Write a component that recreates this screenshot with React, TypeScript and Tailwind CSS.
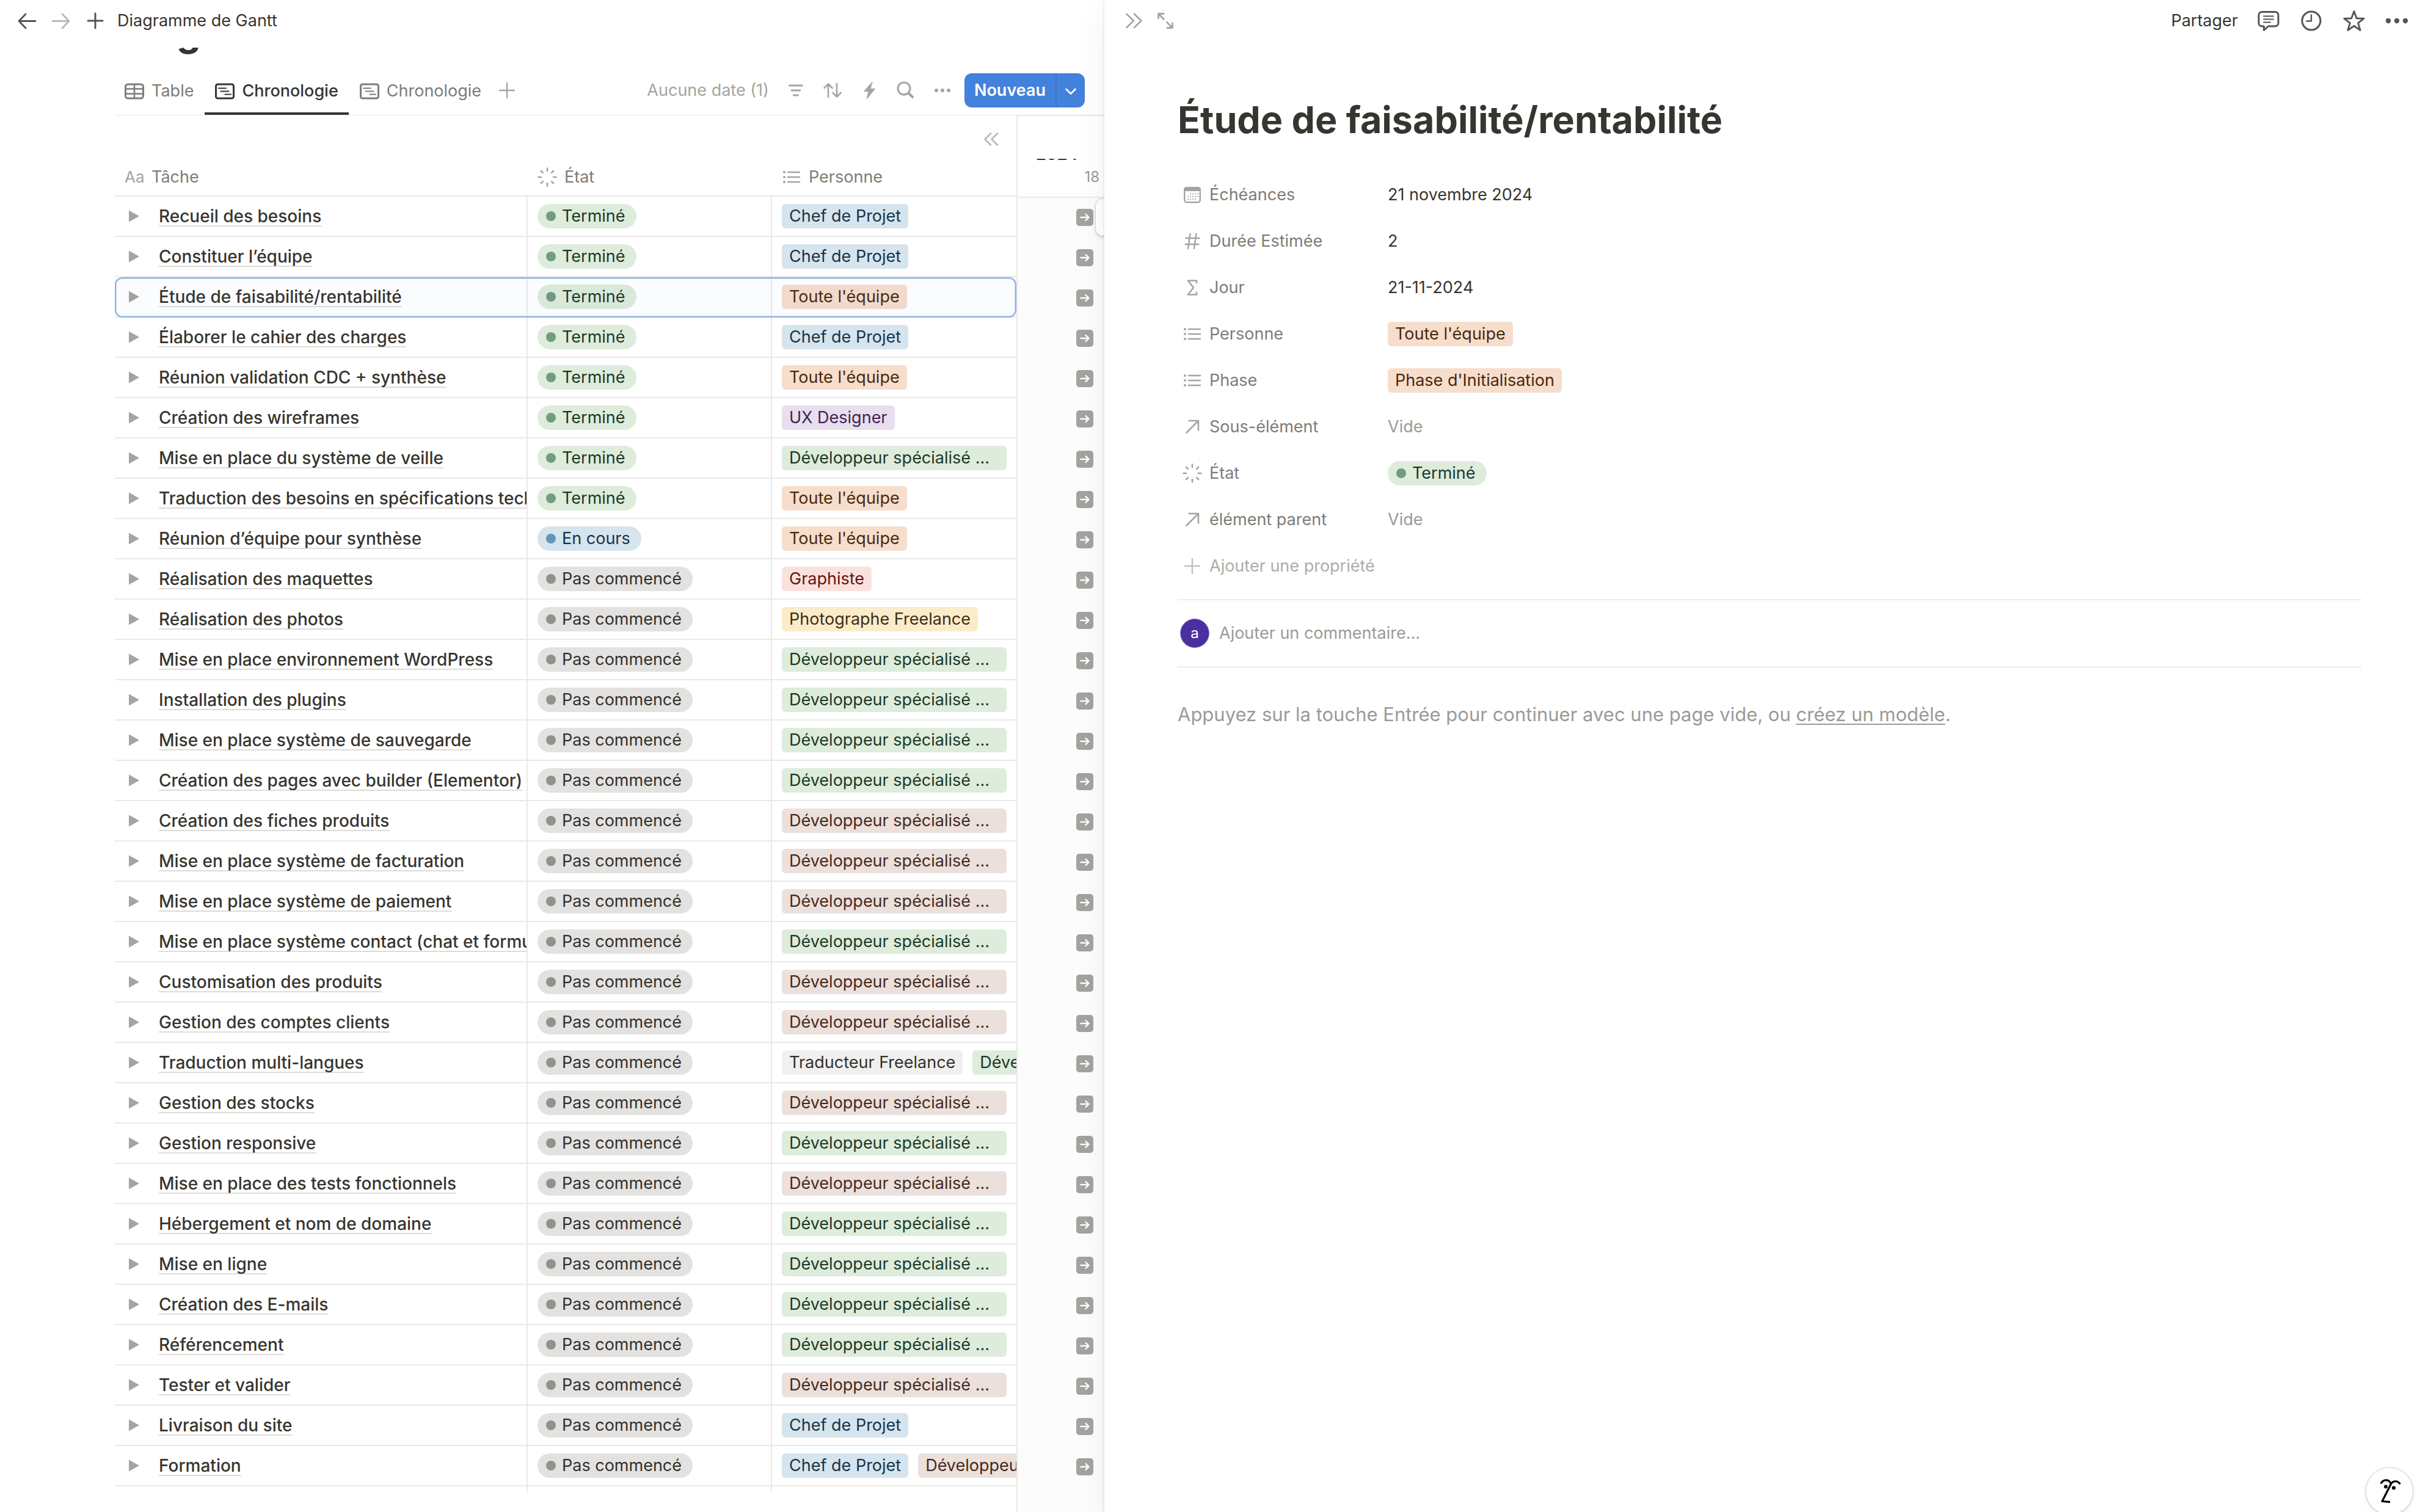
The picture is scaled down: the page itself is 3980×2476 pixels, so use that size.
import type { ReactNode } from "react";

type Tone = "blue" | "orange" | "purple" | "green" | "red" | "yellow" | "brown" | "gray";
type State = "done" | "progress" | "todo";

const TAG_TONES: Record<Tone, string> = {
  blue: "bg-[#d6e4ee] text-[#183347]",
  orange: "bg-[#f6ddcc] text-[#49290e]",
  purple: "bg-[#e7deee] text-[#412454]",
  green: "bg-[#ddecdb] text-[#1c3829]",
  red: "bg-[#fbe1de] text-[#5d1715]",
  yellow: "bg-[#fbecc9] text-[#402c1b]",
  brown: "bg-[#ebe0db] text-[#442a1e]",
  gray: "bg-[#f1f0ef] text-[#32302c]",
};

const STATES: Record<State, { label: string; pill: string; dot: string }> = {
  done: { label: "Terminé", pill: "bg-[#ddecdb] text-[#1c3829]", dot: "bg-[#749b82]" },
  progress: { label: "En cours", pill: "bg-[#d6e4ee] text-[#183347]", dot: "bg-[#6496ba]" },
  todo: { label: "Pas commencé", pill: "bg-[#e3e2e0] text-[#32302c]", dot: "bg-[#91918e]" },
};

const CHEF: [string, Tone] = ["Chef de Projet", "blue"];
const TEAM: [string, Tone] = ["Toute l'équipe", "orange"];
const DEV_WP: [string, Tone] = ["Développeur spécialisé WordPress", "green"];
const DEV_WOO: [string, Tone] = ["Développeur spécialisé WooCommerce", "brown"];

const TASKS: { name: string; state: State; people: [string, Tone][]; selected?: boolean }[] = [
  { name: "Recueil des besoins", state: "done", people: [CHEF] },
  { name: "Constituer l’équipe", state: "done", people: [CHEF] },
  { name: "Étude de faisabilité/rentabilité", state: "done", people: [TEAM], selected: true },
  { name: "Élaborer le cahier des charges", state: "done", people: [CHEF] },
  { name: "Réunion validation CDC + synthèse", state: "done", people: [TEAM] },
  { name: "Création des wireframes", state: "done", people: [["UX Designer", "purple"]] },
  { name: "Mise en place du système de veille", state: "done", people: [DEV_WP] },
  { name: "Traduction des besoins en spécifications techniques", state: "done", people: [TEAM] },
  { name: "Réunion d’équipe pour synthèse", state: "progress", people: [TEAM] },
  { name: "Réalisation des maquettes", state: "todo", people: [["Graphiste", "red"]] },
  { name: "Réalisation des photos", state: "todo", people: [["Photographe Freelance", "yellow"]] },
  { name: "Mise en place environnement WordPress", state: "todo", people: [DEV_WP] },
  { name: "Installation des plugins", state: "todo", people: [DEV_WP] },
  { name: "Mise en place système de sauvegarde", state: "todo", people: [DEV_WP] },
  { name: "Création des pages avec builder (Elementor)", state: "todo", people: [DEV_WP] },
  { name: "Création des fiches produits", state: "todo", people: [DEV_WOO] },
  { name: "Mise en place système de facturation", state: "todo", people: [DEV_WOO] },
  { name: "Mise en place système de paiement", state: "todo", people: [DEV_WOO] },
  { name: "Mise en place système contact (chat et formulaire)", state: "todo", people: [DEV_WP] },
  { name: "Customisation des produits", state: "todo", people: [DEV_WOO] },
  { name: "Gestion des comptes clients", state: "todo", people: [DEV_WOO] },
  { name: "Traduction multi-langues", state: "todo", people: [["Traducteur Freelance", "gray"], DEV_WP] },
  { name: "Gestion des stocks", state: "todo", people: [DEV_WOO] },
  { name: "Gestion responsive", state: "todo", people: [DEV_WP] },
  { name: "Mise en place des tests fonctionnels", state: "todo", people: [DEV_WOO] },
  { name: "Hébergement et nom de domaine", state: "todo", people: [DEV_WP] },
  { name: "Mise en ligne", state: "todo", people: [DEV_WP] },
  { name: "Création des E-mails", state: "todo", people: [DEV_WP] },
  { name: "Référencement", state: "todo", people: [DEV_WP] },
  { name: "Tester et valider", state: "todo", people: [DEV_WOO] },
  { name: "Livraison du site", state: "todo", people: [CHEF] },
  { name: "Formation", state: "todo", people: [CHEF, DEV_WOO] },
];

function Icon({ d, w = 3, children }: { d?: string; w?: number; children?: ReactNode }) {
  return (
    <svg
      viewBox="0 0 32 32"
      className="size-8 shrink-0"
      fill="none"
      stroke="currentColor"
      strokeWidth={w}
      strokeLinecap="round"
      strokeLinejoin="round"
      aria-hidden="true"
    >
      {d && <path d={d} />}
      {children}
    </svg>
  );
}

const ListIcon = () => (
  <Icon w={2.4} d="M10 8h19M10 16h19M10 24h19">
    <g fill="currentColor" stroke="none">
      <circle cx="4" cy="8" r="2" />
      <circle cx="4" cy="16" r="2" />
      <circle cx="4" cy="24" r="2" />
    </g>
  </Icon>
);

const StatusIcon = () => (
  <Icon w={2.6} d="M16 1.5v4.5M16 26v4.5M1.5 16H6M26 16h4.5M6 6l2.8 2.8M23.2 23.2 26 26M26 6l-2.8 2.8M8.8 23.2 6 26" />
);

const TimelineIcon = () => (
  <Icon w={3}>
    <rect x="1.5" y="5" width="29" height="23" rx="3" />
    <path strokeWidth="2.2" d="M6 11.5h12M9.5 16.5h13M16.5 21.5h9.5" />
  </Icon>
);

const TableIcon = () => (
  <Icon w={3}>
    <rect x="1.5" y="5" width="29" height="23" rx="4" />
    <path strokeWidth="2.6" d="M1.5 12.5h29M1.5 20.5h29M16 5v23" />
  </Icon>
);

const CalendarIcon = () => (
  <Icon w={2.4}>
    <rect x="3.2" y="4.2" width="25.6" height="24" rx="3.5" />
    <path fill="currentColor" stroke="none" d="M2 10V8a5 5 0 0 1 5-5h18a5 5 0 0 1 5 5v2z" />
    <path strokeWidth="2" d="M13 14.5h.1M17 14.5h.1M21 14.5h.1M25 14.5h.1M9 18.8h.1M13 18.8h.1M17 18.8h.1M21 18.8h.1M25 18.8h.1M9 23h.1M13 23h.1M17 23h.1M21 23h.1" />
  </Icon>
);

const HashIcon = () => <Icon w={2.4} d="M12.5 4 9 28M22.5 4 19 28M5.5 11h22M4.5 21h22" />;
const SigmaIcon = () => <Icon w={2.6} d="M23 8V4.5H9L18 16 9 27.5h14V24" />;
const RelationIcon = () => <Icon w={2.6} d="M6.5 25.5 25.5 6.5M10.5 6h15.5v15.5" />;
const PlusIcon = ({ w = 2.4 }: { w?: number }) => <Icon w={w} d="M16 4v24M4 16h24" />;

const DotsIcon = () => (
  <Icon>
    <g fill="currentColor" stroke="none">
      <circle cx="6" cy="16" r="3" />
      <circle cx="16" cy="16" r="3" />
      <circle cx="26" cy="16" r="3" />
    </g>
  </Icon>
);

function Tag({ label, tone }: { label: string; tone: Tone }) {
  return (
    <span className={`block h-10 max-w-[368px] shrink-0 rounded-md px-3 leading-10 ${TAG_TONES[tone]}`}>
      <span className="block truncate">{label}</span>
    </span>
  );
}

function StatePill({ state }: { state: State }) {
  const s = STATES[state];
  return (
    <span className={`inline-flex h-10 items-center gap-2.5 rounded-full pr-[18px] pl-3.5 ${s.pill}`}>
      <span className={`size-4 rounded-full ${s.dot}`} />
      {s.label}
    </span>
  );
}

function IconButton({ label, className = "", children }: { label: string; className?: string; children: ReactNode }) {
  return (
    <button type="button" aria-label={label} className={`flex shrink-0 items-center justify-center ${className}`}>
      {children}
    </button>
  );
}

function TaskTable() {
  return (
    <section className="w-[1476px] shrink-0 overflow-hidden border-t border-[#e9e9e7]">
      <div className="flex h-[69px] items-center justify-end pt-2 pr-[26px] text-[#b9b8b5]">
        <IconButton label="Replier le tableau">
          <Icon w={2.6} d="M16 6.5 6.5 16 16 25.5M27 6.5 17.5 16 27 25.5" />
        </IconButton>
      </div>
      <table className="w-full table-fixed border-separate border-spacing-0 text-left">
        <colgroup>
          <col className="w-[676px]" />
          <col className="w-[400px]" />
          <col className="w-[400px]" />
        </colgroup>
        <thead>
          <tr className="text-[#7d7c78]">
            <th className="h-16 border-b-2 border-[#e9e9e7] p-0 pt-0.5 pl-4 font-normal">
              <div className="flex items-center gap-3">
                <span className="w-8 text-[26px] text-[#a5a49f]">Aa</span>
                Tâche
              </div>
            </th>
            <th className="h-16 border-b-2 border-[#e9e9e7] p-0 pt-0.5 pl-4 font-normal">
              <div className="flex items-center gap-3">
                <span className="text-[#a5a49f]"><StatusIcon /></span>
                État
              </div>
            </th>
            <th className="h-16 border-b-2 border-[#e9e9e7] p-0 pt-0.5 pl-4 font-normal">
              <div className="flex items-center gap-3">
                <span className="text-[#a5a49f]"><ListIcon /></span>
                Personne
              </div>
            </th>
          </tr>
        </thead>
        <tbody>
          {TASKS.map((task) => (
            <tr key={task.name} className="relative">
              <td className="h-[66px] overflow-hidden border-r-2 border-b-2 border-[#e9e9e7] p-0 pl-4">
                <div className="flex items-center gap-7 overflow-hidden whitespace-nowrap">
                  <IconButton label="Déplier" className="text-[#a5a49f]">
                    <svg viewBox="0 0 28 28" className="h-7 w-7" fill="currentColor" aria-hidden="true">
                      <path d="M7 4.5v19L24 14z" />
                    </svg>
                  </IconButton>
                  <a
                    href="#"
                    className="text-[28px] font-medium underline decoration-[#dddcda] decoration-2 underline-offset-[5px] [text-decoration-skip-ink:none]"
                  >
                    {task.name}
                  </a>
                </div>
                {task.selected && (
                  <div className="pointer-events-none absolute inset-0 rounded-xl border-2 border-[#8eb2e6] bg-[#2f7be0]/[0.025] shadow-[inset_0_0_0_1px_#c9dbf5]" />
                )}
              </td>
              <td className="h-[66px] border-r-2 border-b-2 border-[#e9e9e7] p-0 pl-4">
                <div className="flex">
                  <StatePill state={task.state} />
                </div>
              </td>
              <td className="h-[66px] overflow-hidden border-b-2 border-[#e9e9e7] p-0 pl-4">
                <div className="flex gap-4 overflow-hidden whitespace-nowrap">
                  {task.people.map(([label, tone]) => (
                    <Tag key={label} label={label} tone={tone} />
                  ))}
                </div>
              </td>
            </tr>
          ))}
          <tr aria-hidden="true">
            <td className="h-2.5 border-r-2 border-[#e9e9e7] p-0" />
            <td className="h-2.5 border-r-2 border-[#e9e9e7] p-0" />
            <td className="h-2.5 p-0" />
          </tr>
        </tbody>
      </table>
    </section>
  );
}

function Timeline() {
  return (
    <section className="relative min-w-0 flex-1 overflow-hidden border-t-2 border-l-2 border-[#e9e9e7] bg-[#fcfcfc]">
      <div className="flex h-[134px] flex-col border-b-2 border-[#e9e9e7] bg-white pt-[70px]">
        <div className="h-1 shrink-0 overflow-hidden pl-[30px] font-semibold">
          <div className="-mt-[21px] leading-7">2024</div>
        </div>
        <div className="pt-1.5 pr-2 text-right text-2xl leading-10 text-[#9b9a97]">18</div>
      </div>
      {TASKS.map((task) => (
        <div key={task.name} className="flex h-[66px] items-center justify-end pr-[18px] pb-0.5">
          <button
            type="button"
            aria-label={`Aller à ${task.name}`}
            className="flex size-7 items-center justify-center rounded-[5px] bg-[#a3a29e] text-white"
          >
            <svg viewBox="0 0 28 28" className="size-7" fill="none" stroke="currentColor" strokeWidth="2.4" strokeLinecap="round" strokeLinejoin="round" aria-hidden="true">
              <path d="M7.5 14h13M15.5 9l5 5-5 5" />
            </svg>
          </button>
        </div>
      ))}
      <div className="absolute top-[136px] -right-12 h-[60px] w-[62px] rounded-xl bg-white shadow-[0_0_0_2px_rgba(15,15,15,0.08),0_4px_6px_rgba(15,15,15,0.1)]" />
    </section>
  );
}

function Board() {
  return (
    <main className="flex min-w-0 flex-col overflow-hidden">
      <header className="flex h-[68px] shrink-0 items-center gap-5 pl-7">
        <div className="flex items-center gap-6 text-[#55544f]">
          <IconButton label="Précédent">
            <Icon w={2.8} d="M30 16.5H3M14 5 3 16.5 14 28" />
          </IconButton>
          <IconButton label="Suivant" className="text-[#bbbab7]">
            <Icon w={2.8} d="M2 16.5h27M18 5l11 11.5L18 28" />
          </IconButton>
          <IconButton label="Nouvelle page">
            <PlusIcon w={3} />
          </IconButton>
        </div>
        <a href="#">Diagramme de Gantt</a>
      </header>
      <div className="mt-2.5 h-[30px] shrink-0 overflow-hidden pl-[188px]">
        <h1 className="-mt-[58px] text-[64px] leading-none font-bold">Diagramme de Gantt</h1>
      </div>
      <div className="flex h-20 shrink-0 items-center justify-between pr-8 pl-[188px]">
        <nav className="flex h-full gap-0.5 text-[#7d7c78]">
          <button type="button" className="flex items-center gap-3 border-b-4 border-transparent px-4 pt-1.5">
            <TableIcon /> Table
          </button>
          <button type="button" className="flex items-center gap-3 border-b-4 border-[#37352f] px-[17px] pt-1.5 font-medium text-[#37352f]">
            <TimelineIcon /> Chronologie
          </button>
          <button type="button" className="flex items-center gap-3 border-b-4 border-transparent px-4 pt-1.5">
            <TimelineIcon /> Chronologie
          </button>
          <IconButton label="Ajouter une vue" className="pl-2 text-[#a5a49f]">
            <PlusIcon />
          </IconButton>
        </nav>
        <div className="flex items-center gap-7 text-[#a5a49f]">
          <button type="button">Aucune date (1)</button>
          <IconButton label="Filtrer">
            <Icon w={2.8} d="M5.5 8h21M9 16h14M12.5 24h7" />
          </IconButton>
          <IconButton label="Trier">
            <Icon w={2.6} d="M9 27V6M2.5 12 9 5.5l6.5 6.5M23 5v21M16.5 20l6.5 6.5 6.5-6.5" />
          </IconButton>
          <IconButton label="Automatisations">
            <Icon w={1}>
              <path fill="currentColor" d="M21 2.5 7.5 17.5H15L12 30l13.5-16.5H18z" />
            </Icon>
          </IconButton>
          <IconButton label="Rechercher">
            <Icon w={3}>
              <circle cx="13" cy="13" r="10" />
              <path strokeWidth="4" d="m21 21 6 6" />
            </Icon>
          </IconButton>
          <div className="flex items-center gap-5">
            <IconButton label="Plus d'options">
              <DotsIcon />
            </IconButton>
            <div className="flex h-14 overflow-hidden rounded-xl bg-[#4281dc] text-white">
              <button type="button" className="border-r-2 border-[#3b74c6] px-4 font-semibold">
                Nouveau
              </button>
              <IconButton label="Choisir un modèle" className="w-[46px]">
                <Icon w={2.6} d="m8.5 14 7.5 7.5L23.5 14" />
              </IconButton>
            </div>
          </div>
        </div>
      </div>
      <div className="flex flex-1 pl-[188px]">
        <TaskTable />
        <Timeline />
      </div>
    </main>
  );
}

function Property({ icon, label, children }: { icon: ReactNode; label: string; children: ReactNode }) {
  return (
    <div className="flex h-[76px] items-center">
      <dt className="flex w-[344px] shrink-0 items-center gap-3 pl-2 text-[#7d7c78]">
        <span className="text-[#a5a49f]">{icon}</span>
        {label}
      </dt>
      <dd className="flex min-w-0">{children}</dd>
    </div>
  );
}

function DetailPanel() {
  return (
    <aside className="relative z-10 flex min-w-0 flex-col bg-white shadow-[0_0_0_2px_rgba(15,15,15,0.04),0_6px_12px_rgba(15,15,15,0.03),0_18px_48px_rgba(15,15,15,0.06)]">
      <header className="flex h-[68px] shrink-0 items-center justify-between pr-9 pl-8">
        <div className="flex gap-5 text-[#a5a49f]">
          <IconButton label="Fermer le volet">
            <Icon w={2.6} d="M4.5 5 16 16 4.5 27M17 5l11.5 11L17 27" />
          </IconButton>
          <IconButton label="Ouvrir en pleine page">
            <Icon w={2.8} d="M4.5 12V4.5H13M5 5l8.5 8.5M27.5 20v7.5H19M27 27l-8.5-8.5" />
          </IconButton>
        </div>
        <div className="flex items-center gap-[30px] text-[#55544f]">
          <button type="button" className="text-[#37352f]">Partager</button>
          <IconButton label="Commentaires" className="w-10">
            <svg viewBox="0 0 40 40" className="size-10" fill="none" stroke="currentColor" strokeWidth="3" strokeLinecap="round" strokeLinejoin="round" aria-hidden="true">
              <path d="M9 5.5h22a5 5 0 0 1 5 5V24a5 5 0 0 1-5 5H19.5l-7 6.5V29H9a5 5 0 0 1-5-5V10.5a5 5 0 0 1 5-5z" />
              <path strokeWidth="2" d="M12 12.5h16M12 17.5h16M12 22.5h11" />
            </svg>
          </IconButton>
          <IconButton label="Historique" className="w-10">
            <svg viewBox="0 0 40 40" className="size-10" fill="none" stroke="currentColor" strokeWidth="3" strokeLinecap="round" strokeLinejoin="round" aria-hidden="true">
              <circle cx="20" cy="20" r="15" />
              <path strokeWidth="2.4" d="M20 10.5v10h-7.5" />
            </svg>
          </IconButton>
          <IconButton label="Ajouter aux favoris" className="w-10">
            <svg viewBox="0 0 40 40" className="size-10" fill="none" stroke="currentColor" strokeWidth="2.8" strokeLinecap="round" strokeLinejoin="round" aria-hidden="true">
              <path d="m20 4.5 4.2 11.5 12 .3-9.6 7.4 3.600 11.800L20 28.500l-10.200 7 3.600-11.800-9.600-7.400 12-.300z" />
            </svg>
          </IconButton>
          <IconButton label="Plus d'actions" className="w-10">
            <svg viewBox="0 0 40 40" className="size-10" fill="currentColor" aria-hidden="true">
              <circle cx="6" cy="20" r="4.2" />
              <circle cx="20" cy="20" r="4.2" />
              <circle cx="34" cy="20" r="4.2" />
            </svg>
          </IconButton>
        </div>
      </header>
      <div className="pt-[92px] pr-[114px] pl-[120px]">
        <h2 className="text-[61px] leading-[72px] font-bold">Étude de faisabilité/rentabilité</h2>
        <dl className="mt-[49px]">
          <Property icon={<CalendarIcon />} label="Échéances">21 novembre 2024</Property>
          <Property icon={<HashIcon />} label="Durée Estimée">2</Property>
          <Property icon={<SigmaIcon />} label="Jour">21-11-2024</Property>
          <Property icon={<ListIcon />} label="Personne"><Tag label="Toute l'équipe" tone="orange" /></Property>
          <Property icon={<ListIcon />} label="Phase"><Tag label="Phase d'Initialisation" tone="orange" /></Property>
          <Property icon={<RelationIcon />} label="Sous-élément"><span className="text-[#9b9a97]">Vide</span></Property>
          <Property icon={<StatusIcon />} label="État"><StatePill state="done" /></Property>
          <Property icon={<RelationIcon />} label="élément parent"><span className="text-[#9b9a97]">Vide</span></Property>
        </dl>
        <button type="button" className="flex h-[76px] items-center gap-3 pl-2 text-[#adaca9]">
          <span className="text-[#c3c2bf]"><PlusIcon /></span>
          Ajouter une propriété
        </button>
        <div className="mt-4 flex h-28 items-center gap-4 border-y-2 border-[#ededec] pl-1">
          <span className="flex size-12 items-center justify-center rounded-full border border-[#8f7fc4] bg-[#4b2fa0] text-2xl text-white">
            a
          </span>
          <input
            type="text"
            aria-label="Commentaire"
            placeholder="Ajouter un commentaire…"
            className="min-w-0 flex-1 outline-none placeholder:text-[#9b9a97] placeholder:opacity-100"
          />
        </div>
        <p className="mt-[53px] text-[31px] leading-[48px] text-[#9b9a97]">
          Appuyez sur la touche Entrée pour continuer avec une page vide, ou{" "}
          <a href="#" className="underline decoration-2 underline-offset-4 [text-decoration-skip-ink:none]">créez un modèle</a>.
        </p>
      </div>
    </aside>
  );
}

export default function App() {
  return (
    <div
      className="grid h-screen grid-cols-[minmax(0,452fr)_minmax(0,543fr)] overflow-hidden bg-white text-[27px] leading-10 text-[#37352f]"
      style={{ fontFamily: 'Inter, "Liberation Sans", sans-serif' }}
    >
      <Board />
      <DetailPanel />
      <button
        type="button"
        aria-label="Aide"
        className="fixed right-[30px] -bottom-1 z-20 size-[76px] rounded-full bg-white text-black shadow-[0_0_0_2px_rgba(15,15,15,0.1),0_4px_8px_rgba(15,15,15,0.08)]"
      >
        <svg viewBox="0 0 76 76" className="size-full" fill="none" stroke="currentColor" strokeWidth="3.2" strokeLinejoin="round" aria-hidden="true">
          <path strokeLinecap="round" d="M24.5 24.5C28 19 36 18 39.5 24" />
          <path d="M55.5 26.5C51.5 20 44 20.5 40.5 26L26 54.5l13 1.2" />
          <circle cx="32" cy="30.5" r="3" fill="currentColor" stroke="none" />
          <circle cx="45" cy="32.5" r="3" fill="currentColor" stroke="none" />
        </svg>
      </button>
    </div>
  );
}
